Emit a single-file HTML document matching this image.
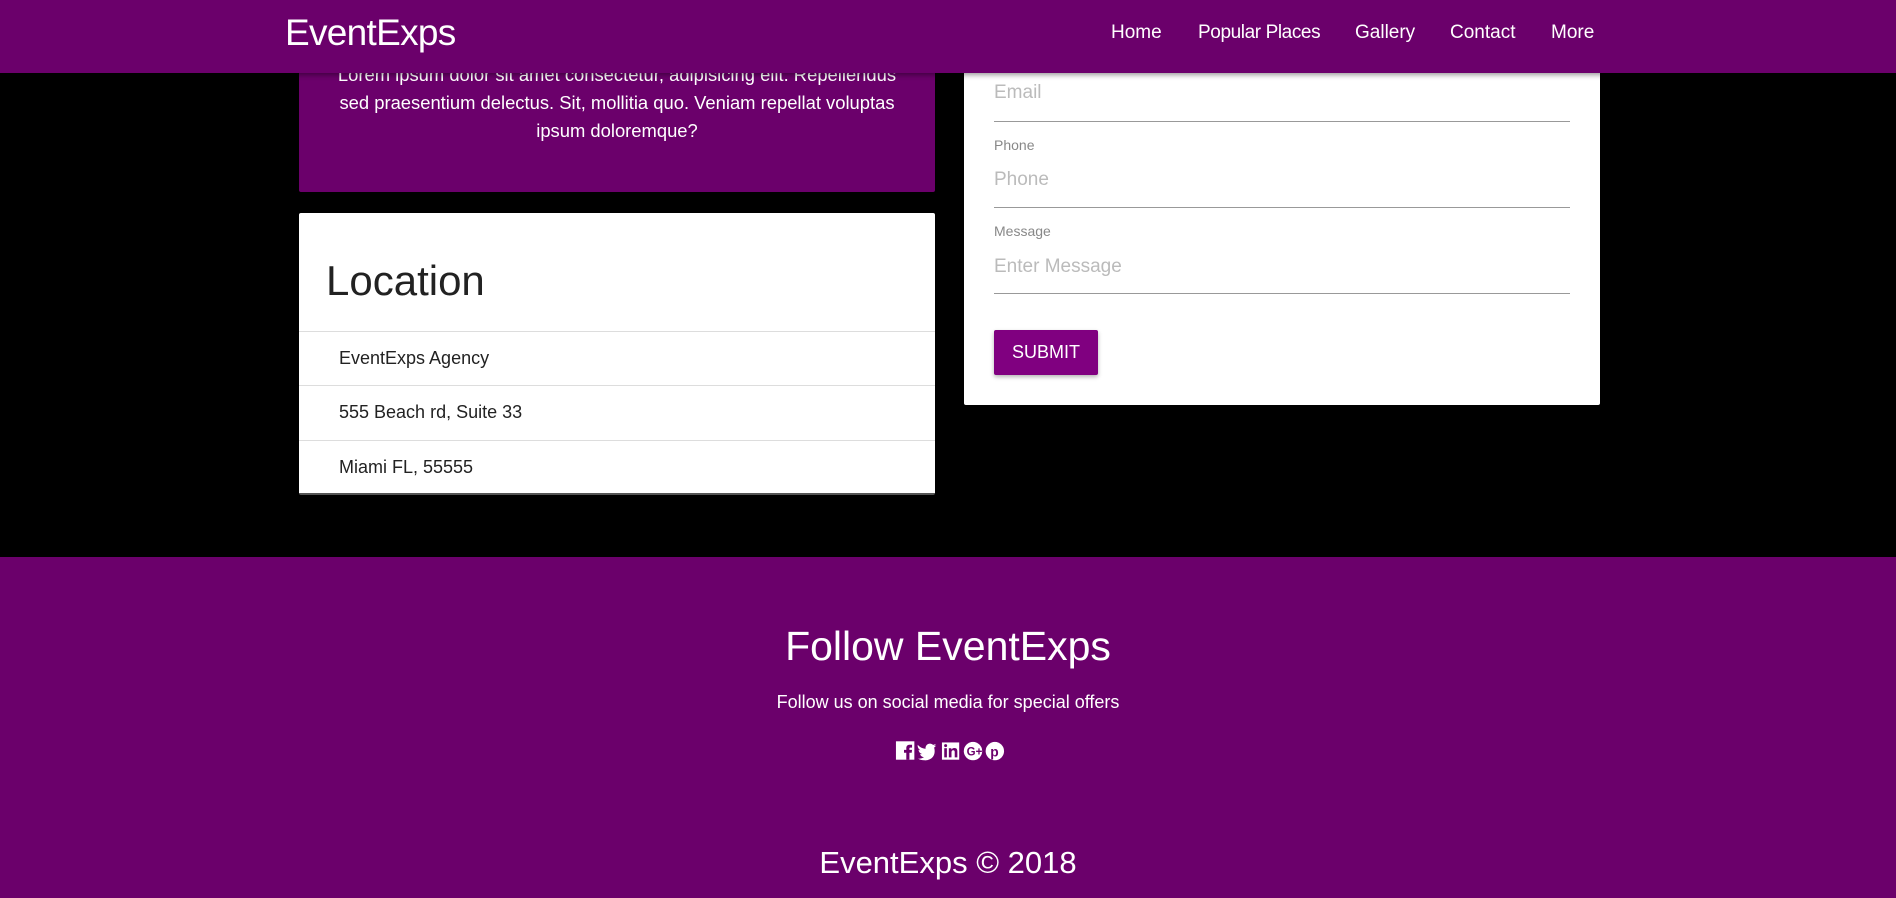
<!DOCTYPE html>
<html><head><meta charset="utf-8"><style>
*{margin:0;padding:0;box-sizing:border-box}
body{width:1896px;height:898px;overflow:hidden;background:#000;font-family:"Liberation Sans",sans-serif;position:relative}
.abs{position:absolute}
nav{position:absolute;left:0;top:0;width:1896px;height:73px;background:#6b006b;box-shadow:0 2px 5px rgba(0,0,0,.4);z-index:5}
.logo{position:absolute;left:285px;top:12px;font-size:37px;color:#fff;letter-spacing:-0.7px}
.nl{position:absolute;top:22px;font-size:19px;color:#fff}
.pcard{left:299px;top:40px;width:636px;height:152px;background:#6b006b;border-radius:2px;color:#fff;font-size:18.4px;line-height:28px;text-align:center;padding-top:21px}
.lcard{left:299px;top:213px;width:636px;height:282px;background:#fff;border-radius:2px;border-bottom:2px solid #555}
.lcard h2{position:absolute;left:27px;top:44px;font-weight:normal;font-size:42px;color:#222}
.row{position:absolute;left:0;width:636px;height:54px;border-top:1px solid #ddd;font-size:18px;color:#222;padding:16px 0 0 40px}
.rcard{left:964px;top:40px;width:636px;height:365px;background:#fff;border-radius:2px}
.ph{position:absolute;left:30px;font-size:19px;color:#bbb}
.lab{position:absolute;left:30px;font-size:14px;color:#888}
.ul{position:absolute;left:30px;width:576px;height:1px;background:#999}
.btn{position:absolute;left:30px;top:290px;width:104px;height:45px;background:#800080;color:#fff;font-size:18px;text-align:center;line-height:45px;box-shadow:0 2px 4px rgba(0,0,0,.3);border-radius:2px}
footer{position:absolute;left:0;top:557px;width:1896px;height:341px;background:#6b006b;color:#fff;text-align:center}
</style></head><body>
<nav>
<div class="logo">EventExps</div>
<div class="nl" style="left:1111px">Home</div>
<div class="nl" style="left:1198px;letter-spacing:-0.4px">Popular Places</div>
<div class="nl" style="left:1355px">Gallery</div>
<div class="nl" style="left:1450px">Contact</div>
<div class="nl" style="left:1551px">More</div>
</nav>
<div class="abs pcard">Lorem ipsum dolor sit amet consectetur, adipisicing elit. Repellendus<br>sed praesentium delectus. Sit, mollitia quo. Veniam repellat voluptas<br>ipsum doloremque?</div>
<div class="abs lcard">
<h2>Location</h2>
<div class="row" style="top:118px">EventExps Agency</div>
<div class="row" style="top:172px">555 Beach rd, Suite 33</div>
<div class="row" style="top:227px">Miami FL, 55555</div>
</div>
<div class="abs rcard">
<div class="ph" style="top:42px">Email</div>
<div class="ul" style="top:81px"></div>
<div class="lab" style="top:97px">Phone</div>
<div class="ph" style="top:129px">Phone</div>
<div class="ul" style="top:167px"></div>
<div class="lab" style="top:183px">Message</div>
<div class="ph" style="top:216px">Enter Message</div>
<div class="ul" style="top:253px"></div>
<div class="btn">SUBMIT</div>
</div>
<footer>
<div style="position:absolute;left:0;width:1896px;top:66px;font-size:41px">Follow EventExps</div>
<div style="position:absolute;left:0;width:1896px;top:135px;font-size:18px">Follow us on social media for special offers</div>
<svg style="position:absolute;left:895px;top:182px" width="110" height="23" viewBox="0 0 94 20">
<rect x="0" y="2" width="16" height="16" fill="#fff"/><path d="M9 18v-6h-2v-2.5h2V8c0-2 1-3 3-3h2v2.5h-1.5c-.6 0-.8.3-.8.9v1.1h2.3l-.3 2.5h-2v6z" fill="#6b006b"/>
<path d="M19 5c1.600 2 4 3.400 6.800 3.500-.5-2.400 1.500-4.500 3.800-4.500 1 0 2 .4 2.700 1.100.8-.2 1.600-.5 2.300-.9-.3.8-.9 1.500-1.600 2 .7-.1 1.400-.3 2-.5-.5.700-1.100 1.300-1.800 1.800C35.200 14.500 30.500 19 24.500 18.500c-2 0-3.700-.5-5.200-1.400 2 .2 3.700-.3 5.100-1.400-1.600 0-3-1.100-3.400-2.600.6.1 1.100.1 1.600-.1-1.700-.4-2.900-1.900-2.900-3.600.5.3 1 .4 1.600.5C19.200 8.300 18.600 6.400 19 5z" fill="#fff"/>
<rect x="40" y="3" width="15" height="15" fill="#fff"/><rect x="42" y="8" width="2.3" height="8" fill="#6b006b"/><circle cx="43.2" cy="5.8" r="1.3" fill="#6b006b"/><path d="M46 8h2.2v1.2c.5-.8 1.300-1.400 2.600-1.400 2 0 2.600 1.200 2.600 3.200V16h-2.300v-4.500c0-1-.3-1.700-1.300-1.700s-1.500.8-1.500 1.800V16H46z" fill="#6b006b"/>
<circle cx="67" cy="10.5" r="8" fill="#fff"/><text x="61.5" y="14.5" font-size="10" font-family="Liberation Sans" font-weight="bold" fill="#6b006b">G+</text>
<circle cx="86" cy="10.5" r="8" fill="#fff"/><text x="82" y="15" font-size="12" font-family="Liberation Sans" font-weight="bold" fill="#6b006b">p</text>
</svg>
<div style="position:absolute;left:0;width:1896px;top:288px;font-size:31px">EventExps © 2018</div>
</footer>
</body></html>
